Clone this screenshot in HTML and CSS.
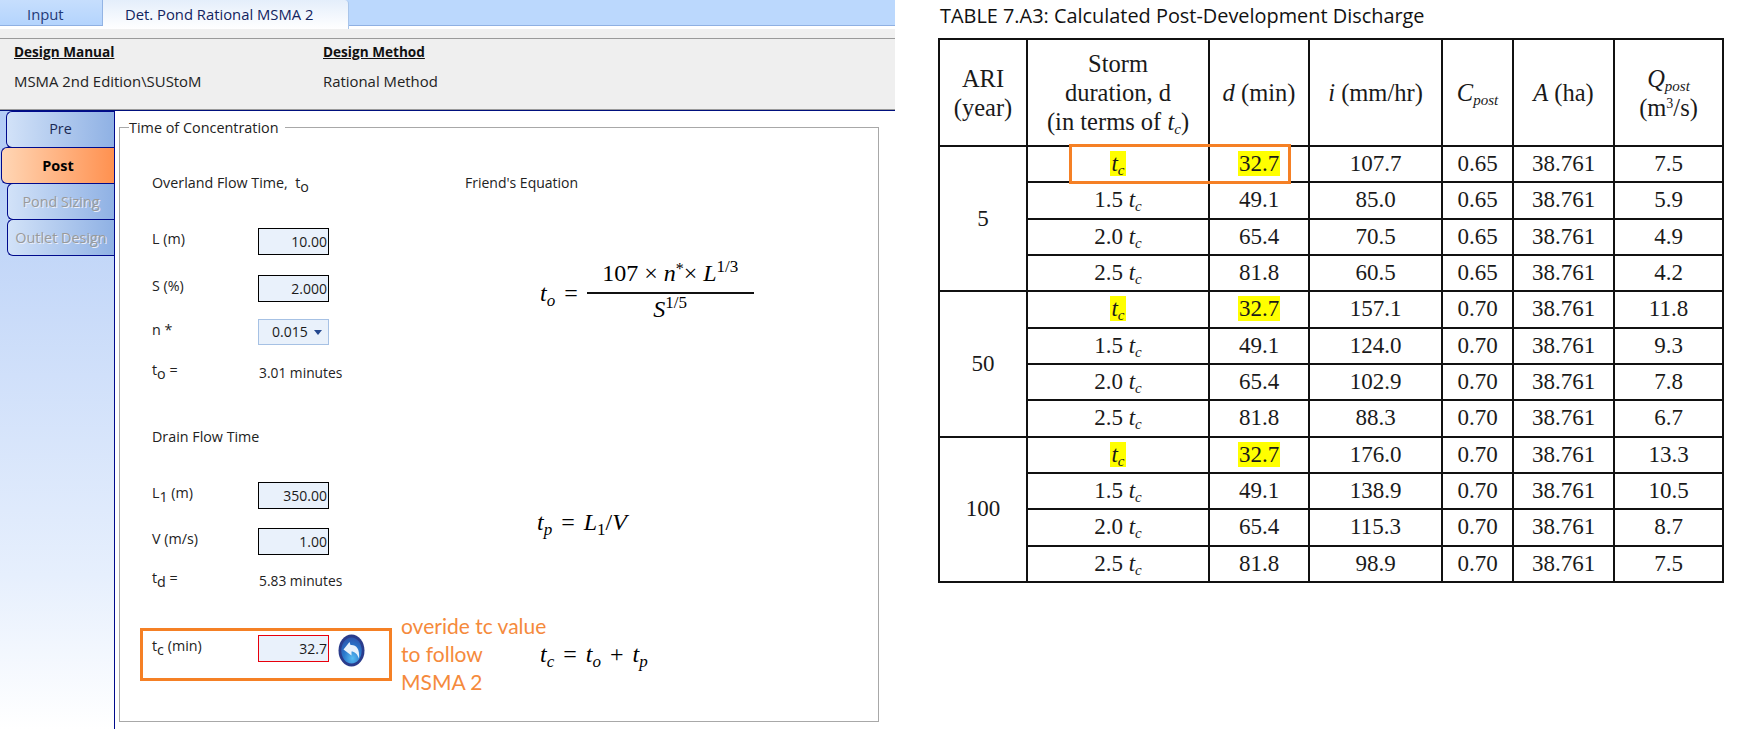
FILE: index.html
```html
<!DOCTYPE html>
<html lang="en">
<head>
<meta charset="utf-8">
<title>Time of Concentration</title>
<link rel="stylesheet" href="styles.css">
</head>
<body>
<div class="page">
  <section class="app">
    <nav class="tabbar">
      <div class="toptab">Input</div>
      <div class="toptab toptab-active">Det. Pond Rational MSMA 2</div>
    </nav>
    <div class="strip"></div>
    <header class="design">
      <div class="design-col design-col-a">
        <div class="design-title">Design Manual</div>
        <div class="design-value">MSMA 2nd Edition\SUStoM</div>
      </div>
      <div class="design-col">
        <div class="design-title">Design Method</div>
        <div class="design-value">Rational Method</div>
      </div>
    </header>
    <div class="workspace">
      <aside class="side">
        <div class="sidetab sidetab-pre">Pre</div>
        <div class="sidetab sidetab-post">Post</div>
        <div class="sidetab sidetab-off">Pond Sizing</div>
        <div class="sidetab sidetab-off">Outlet Design</div>
      </aside>
      <main class="main">
        <fieldset class="group">
          <legend class="group-legend">Time of Concentration</legend>
          <div class="upper">
            <div class="form">
              <div class="row row-head"><span>Overland Flow Time,&nbsp; t<sub class="s">o</sub></span></div>
              <div class="row row-l"><span class="label">L (m)</span><span class="field">10.00</span></div>
              <div class="row row-s"><span class="label">S (%)</span><span class="field">2.000</span></div>
              <div class="row row-n"><span class="label">n *</span><span class="select">0.015<span class="caret"></span></span></div>
              <div class="row row-to"><span class="label">t<sub class="s">o</sub> =</span><span class="result">3.01 minutes</span></div>
              <div class="row row-drain"><span>Drain Flow Time</span></div>
              <div class="row row-l1"><span class="label">L<sub class="s">1</sub> (m)</span><span class="field">350.00</span></div>
              <div class="row row-v"><span class="label">V (m/s)</span><span class="field">1.00</span></div>
              <div class="row row-td"><span class="label">t<sub class="s">d</sub> =</span><span class="result">5.83 minutes</span></div>
            </div>
            <div class="equations">
              <div class="friend">Friend's Equation</div>
              <div class="eq eq-one">
                <span><i>t<sub>o</sub></i></span><span class="eq-op">=</span>
                <div class="frac">
                  <div class="frac-top">107 × <i>n</i><span class="star">*</span>× <i>L</i><sup>1/3</sup></div>
                  <div class="frac-bottom"><i>S</i><sup>1/5</sup></div>
                </div>
              </div>
              <div class="eq eq-two"><span><i>t<sub>p</sub></i></span><span class="eq-op">=</span><span><i>L</i><sub>1</sub>/<i>V</i></span></div>
            </div>
          </div>
          <div class="tc-row">
            <div class="tc-box">
              <span class="label tc-label">t<sub class="s">c</sub> (min)</span>
              <span class="field field-red">32.7</span>
              <svg class="undo" viewBox="0 0 27 33" aria-hidden="true">
                <defs>
                  <radialGradient id="undo-fill" cx="0.55" cy="0.8" r="0.8">
                    <stop offset="0" stop-color="#58bdf2"/>
                    <stop offset="0.55" stop-color="#2a78cc"/>
                    <stop offset="1" stop-color="#2b55ad"/>
                  </radialGradient>
                </defs>
                <ellipse cx="13.5" cy="16.5" rx="13" ry="16" fill="#2a3c8c"/>
                <ellipse cx="13.5" cy="16.5" rx="10.2" ry="13" fill="url(#undo-fill)"/>
                <path d="M5.5 15.5 L11.5 8 L12.5 11 C18 10.5 22 14.5 21 24.5 C19 19.5 16.5 17.5 13.5 17.5 L13.5 21.5 Z" fill="#e9f2fb"/>
              </svg>
            </div>
            <div class="note">overide tc value<br>to follow<br>MSMA 2</div>
            <div class="eq eq-three"><span><i>t<sub>c</sub></i></span><span class="eq-op">=</span><span><i>t<sub>o</sub></i></span><span class="eq-op">+</span><span><i>t<sub>p</sub></i></span></div>
          </div>
        </fieldset>
      </main>
    </div>
  </section>

  <section class="doc">
    <h1 class="doc-title">TABLE 7.A3: Calculated Post-Development Discharge</h1>
    <div class="table-wrap">
      <table class="q-table">
        <colgroup>
          <col class="c1"><col class="c2"><col class="c3"><col class="c4"><col class="c5"><col class="c6"><col class="c7">
        </colgroup>
        <thead>
          <tr>
            <th class="h-ari">ARI<br>(year)</th>
            <th>Storm<br>duration, d<br>(in terms of <i>t<sub>c</sub></i>)</th>
            <th><i>d</i> (min)</th>
            <th><i>i</i> (mm/hr)</th>
            <th><i>C<sub>post</sub></i></th>
            <th><i>A</i> (ha)</th>
            <th class="h-q"><i>Q<sub>post</sub></i><br>(m<sup>3</sup>/s)</th>
          </tr>
        </thead>
        <tbody>
          <tr><td rowspan="4">5</td><td><mark><i>t<sub>c</sub></i></mark></td><td><mark>32.7</mark></td><td>107.7</td><td>0.65</td><td>38.761</td><td>7.5</td></tr>
          <tr><td>1.5 <i>t<sub>c</sub></i></td><td>49.1</td><td>85.0</td><td>0.65</td><td>38.761</td><td>5.9</td></tr>
          <tr><td>2.0 <i>t<sub>c</sub></i></td><td>65.4</td><td>70.5</td><td>0.65</td><td>38.761</td><td>4.9</td></tr>
          <tr><td>2.5 <i>t<sub>c</sub></i></td><td>81.8</td><td>60.5</td><td>0.65</td><td>38.761</td><td>4.2</td></tr>
          <tr><td rowspan="4">50</td><td><mark><i>t<sub>c</sub></i></mark></td><td><mark>32.7</mark></td><td>157.1</td><td>0.70</td><td>38.761</td><td>11.8</td></tr>
          <tr><td>1.5 <i>t<sub>c</sub></i></td><td>49.1</td><td>124.0</td><td>0.70</td><td>38.761</td><td>9.3</td></tr>
          <tr><td>2.0 <i>t<sub>c</sub></i></td><td>65.4</td><td>102.9</td><td>0.70</td><td>38.761</td><td>7.8</td></tr>
          <tr><td>2.5 <i>t<sub>c</sub></i></td><td>81.8</td><td>88.3</td><td>0.70</td><td>38.761</td><td>6.7</td></tr>
          <tr><td rowspan="4">100</td><td><mark><i>t<sub>c</sub></i></mark></td><td><mark>32.7</mark></td><td>176.0</td><td>0.70</td><td>38.761</td><td>13.3</td></tr>
          <tr><td>1.5 <i>t<sub>c</sub></i></td><td>49.1</td><td>138.9</td><td>0.70</td><td>38.761</td><td>10.5</td></tr>
          <tr><td>2.0 <i>t<sub>c</sub></i></td><td>65.4</td><td>115.3</td><td>0.70</td><td>38.761</td><td>8.7</td></tr>
          <tr><td>2.5 <i>t<sub>c</sub></i></td><td>81.8</td><td>98.9</td><td>0.70</td><td>38.761</td><td>7.5</td></tr>
        </tbody>
      </table>
      <div class="callout"></div>
    </div>
  </section>
</div>
</body>
</html>
```

FILE: styles.css
```css
* { box-sizing: border-box; }
html, body { margin: 0; padding: 0; height: 100%; background: #fff; overflow: hidden; }
body { font-family: "Open Sans", "Noto Sans", sans-serif; font-size: 14px; color: #111; }

.page { display: flex; height: 729px; }

/* application window */
.app { width: 895px; flex: none; display: flex; flex-direction: column; }

.tabbar { height: 26px; background: #bbd8fd; border-bottom: 1px solid #8fb0e2; display: flex; position: relative; }
.toptab { width: 103px; height: 25px; padding: 0 0 0 27px; line-height: 29px; font-size: 14.8px; color: #1f3a78; border-right: 1px solid #93b4e4;
  background: linear-gradient(#c6defd, #b4d4fd); white-space: nowrap; }
.toptab-active { width: 246px; height: 29px; padding-left: 22px; color: #12245f; border-right: 1px solid #a9c5ea; border-radius: 0 4px 0 0;
  background: linear-gradient(#e4eefb, #fff); position: relative; }

.strip { height: 13px; background: linear-gradient(#fff 0, #fff 3px, #f0f0f0 3px); border-bottom: 1px solid #9a9a9a; }

.design { height: 71px; background: #efefef; border-bottom: 1px solid #9a9a9a; display: flex; padding: 4px 0 0 14px; }
.design-col-a { width: 309px; }
.design-title { font-weight: 700; text-decoration: underline; line-height: 18px; font-size: 13.6px; color: #111; }
.design-value { margin-top: 10px; line-height: 20px; color: #222; font-size: 14.9px; }

.workspace { flex: 1; display: flex; border-top: 1px solid #00107e; min-height: 0; }

.side { width: 115px; flex: none; border-right: 1px solid #000a8c; background: linear-gradient(#b3ccf6 0, #e6effd 75%, #fff 100%);
  display: flex; flex-direction: column; align-items: flex-end; }
.sidetab { height: 37px; margin-top: -1px; border: 1px solid #000a8c; border-right: 0; border-radius: 6px 0 0 6px; text-align: center; line-height: 35px; font-size: 14.4px;
  background: linear-gradient(90deg, #d2e2f8, #8fb1e4); white-space: nowrap; }
.sidetab-pre { width: 108px; margin-top: 0; color: #1a2a55; line-height: 34px; }
.sidetab-post { width: 113px; font-weight: 700; color: #000; background: linear-gradient(90deg, #ffd6b5, #ff9150); }
.sidetab-off { width: 107px; color: #9a9a9a; text-shadow: 1px 1px 0 #e8eefa; }

.main { flex: 1; padding: 6px 0 0 4px; background: #fff; min-width: 0; }
.group { width: 760px; height: 605px; margin: 0; padding: 33px 0 0 20px; border: 1px solid #a8a8a8; min-width: 0; }
.group-legend { padding: 2px 6px 0 0; margin-left: -11px; line-height: 18px; font-size: 14.4px; color: #222; }

.upper { display: grid; grid-template-columns: 325px 1fr; }
.form { padding-left: 12px; }
.row { display: flex; align-items: flex-start; height: 27px; line-height: 22px; font-size: 14.3px; color: #222; }
.row-head { height: 26px; line-height: 26px; }
.row-l { margin-top: 32px; }
.row-s { margin-top: 20px; }
.row-n { margin-top: 17px; height: 26px; }
.row-to { margin-top: 14px; }
.row-drain { margin-top: 38px; line-height: 26px; }
.row-l1 { margin-top: 31px; }
.row-v { margin-top: 19px; }
.row-td { margin-top: 12px; }

.label { width: 106px; flex: none; }
.s { font-size: 14.3px; vertical-align: -4px; line-height: 0; }
.field { width: 71px; height: 27px; flex: none; display: block; background: #e9f1fb; border: 1px solid #000; text-align: right; padding-right: 1px; line-height: 26px; font-size: 14px; color: #1a1a1a; }
.field-red { border-color: #e8000c; }
.select { width: 71px; height: 26px; flex: none; background: #e9f1fb; border: 1px solid #a6c1e4; line-height: 24px; font-size: 14px; padding-left: 13px; display: flex; align-items: center; color: #1a1a1a; }
.caret { margin-left: 6px; width: 0; height: 0; border-left: 4.5px solid transparent; border-right: 4.5px solid transparent; border-top: 5px solid #24488f; }
.result { line-height: 27px; margin-left: 1px; font-size: 13.8px; }

.friend { height: 26px; line-height: 26px; color: #222; }
.eq { font-family: "Liberation Serif", "Times New Roman", serif; color: #000; font-size: 24px; display: flex; align-items: center; }
.eq i { font-style: italic; }
.eq sub { font-size: 17px; vertical-align: -5px; line-height: 0; }
.eq sup { font-size: 17px; vertical-align: 9px; line-height: 0; }
.eq-op { margin: 0 9px; }
.eq-one { margin: 57px 0 0 75px; height: 80px; }
.frac { width: 167px; text-align: center; }
.frac-top { border-bottom: 2px solid #111; height: 40px; line-height: 38px; }
.frac-bottom { height: 38px; line-height: 30px; }
.star { font-size: 16px; vertical-align: 7px; line-height: 0; }
.eq-two { margin: 169px 0 0 72px; height: 40px; }

.tc-row { display: flex; margin-top: 34px; }
.tc-box { width: 252px; height: 53px; flex: none; border: 3px solid #f58025; display: flex; align-items: flex-start; padding: 4px 0 0 9px; margin-right: 9px; }
.tc-label { line-height: 22px; font-size: 14.3px; color: #222; }
.undo { width: 27px; height: 33px; margin: -1px 0 0 9px; flex: none; }
.note { width: 139px; flex: none; margin-top: -16px; font-family: Lato, "Open Sans", sans-serif; font-size: 21px; line-height: 28px; color: #f58a3c; white-space: nowrap; }
.eq-three { height: 40px; margin-top: 6px; }

/* right hand document */
.doc { margin-left: 43px; width: 790px; }
.doc-title { margin: 3px 0 0 2px; height: 35px; font-size: 19.9px; font-weight: 400; line-height: 26px; color: #111; white-space: nowrap; }
.table-wrap { position: relative; width: 787px; }
.q-table { border-collapse: collapse; table-layout: fixed; width: 784px; font-family: "Liberation Serif", "Times New Roman", serif; font-size: 23px; color: #1a1a1a; }
.c1 { width: 88px; } .c2 { width: 182px; } .c3 { width: 100px; } .c4 { width: 133px; } .c5 { width: 71px; } .c6 { width: 101px; } .c7 { width: 109px; }
.q-table th, .q-table td { border: 2px solid #111; padding: 0; text-align: center; font-weight: 400; }
.q-table th { height: 107px; line-height: 29px; font-size: 24.5px; }
.q-table td { height: 36.33px; line-height: 26px; }
.q-table sub { font-size: 15px; vertical-align: -4px; line-height: 0; }
.q-table sup { font-size: 14px; vertical-align: 8px; line-height: 0; }
.h-q { line-height: 27px; }
mark { background: #ffff00; color: inherit; padding: 0 1px; }
.callout { position: absolute; left: 131px; top: 106px; width: 222px; height: 40px; border: 3px solid #f58025; }
```
